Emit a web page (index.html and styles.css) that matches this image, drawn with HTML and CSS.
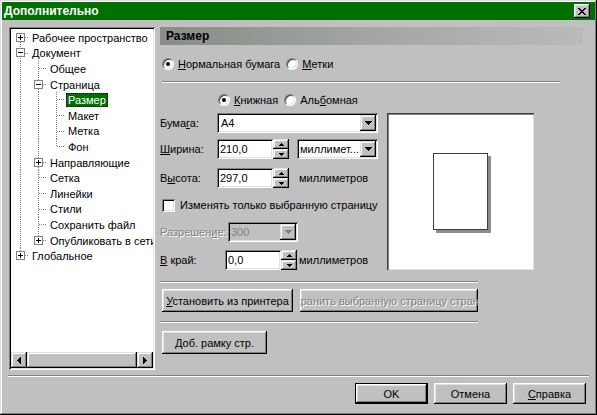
FILE: index.html
```html
<!DOCTYPE html>
<html lang="ru">
<head>
    <meta charset="UTF-8">
    <title>Дополнительно</title>
    <link rel="stylesheet" href="styles.css">
</head>
<body>
<div class="window">
    <div class="titlebar">
        <span class="title">Дополнительно</span>
        <button class="close"><svg width="8" height="7" viewBox="0 0 8 7"><path d="M0 0h2v1H0zM6 0h2v1H6zM1 1h2v1H1zM5 1h2v1H5zM2 2h4v1H2zM3 3h2v1H3zM2 4h4v1H2zM1 5h2v1H1zM5 5h2v1H5zM0 6h2v1H0zM6 6h2v1H6z"/></svg></button>
    </div>

    <div class="main">
        <!-- tree of option groups -->
        <div class="tree">
            <div class="tree-list">
                <div class="node"><span class="g first"><i class="box plus"></i></span><span class="label">Рабочее пространство</span></div>
                <div class="node"><span class="g tee"><i class="box"></i></span><span class="label">Документ</span></div>
                <div class="node"><span class="g pipe"></span><span class="g tee"></span><span class="label">Общее</span></div>
                <div class="node"><span class="g pipe"></span><span class="g tee"><i class="box"></i></span><span class="label">Страница</span></div>
                <div class="node"><span class="g pipe"></span><span class="g pipe"></span><span class="g tee"></span><span class="label sel">Размер</span></div>
                <div class="node"><span class="g pipe"></span><span class="g pipe"></span><span class="g tee"></span><span class="label">Макет</span></div>
                <div class="node"><span class="g pipe"></span><span class="g pipe"></span><span class="g tee"></span><span class="label">Метка</span></div>
                <div class="node"><span class="g pipe"></span><span class="g pipe"></span><span class="g ell"></span><span class="label">Фон</span></div>
                <div class="node"><span class="g pipe"></span><span class="g tee"><i class="box plus"></i></span><span class="label">Направляющие</span></div>
                <div class="node"><span class="g pipe"></span><span class="g tee"></span><span class="label">Сетка</span></div>
                <div class="node"><span class="g pipe"></span><span class="g tee"></span><span class="label">Линейки</span></div>
                <div class="node"><span class="g pipe"></span><span class="g tee"></span><span class="label">Стили</span></div>
                <div class="node"><span class="g pipe"></span><span class="g tee"></span><span class="label">Сохранить файл</span></div>
                <div class="node"><span class="g pipe"></span><span class="g ell"><i class="box plus"></i></span><span class="label">Опубликовать в сети</span></div>
                <div class="node"><span class="g ell"><i class="box plus"></i></span><span class="label">Глобальное</span></div>
            </div>
            <div class="hscroll">
                <span class="sb-btn"><svg width="4" height="7" viewBox="0 0 4 7"><path d="M3 0h1v7H3zM2 1h1v5H2zM1 2h1v3H1zM0 3h1v1H0z"/></svg></span>
                <span class="sb-thumb"></span>
                <span class="sb-btn"><svg width="4" height="7" viewBox="0 0 4 7"><path d="M0 0h1v7H0zM1 1h1v5H1zM2 2h1v3H2zM3 3h1v1H3z"/></svg></span>
            </div>
        </div>

        <!-- page size panel -->
        <div class="panel">
            <div class="header">Размер</div>

            <div class="opts">
                <span class="opt"><span class="radio on"></span><span><u>Н</u>ормальная бумага</span></span>
                <span class="opt"><span class="radio"></span><span><u>М</u>етки</span></span>
            </div>
            <div class="sep sep-top"></div>
            <div class="opts opts-orient">
                <span class="opt"><span class="radio on"></span><span><u>К</u>нижная</span></span>
                <span class="opt"><span class="radio"></span><span>Аль<u>б</u>омная</span></span>
            </div>

            <div class="page">
                <div class="form">
                    <div class="row">
                        <span class="lbl lbl-main">Бума<u>г</u>а:</span>
                        <span class="field combo combo-paper"><span class="val">A4</span><span class="drop"><svg width="7" height="4" viewBox="0 0 7 4"><path d="M0 0h7v1H0zM1 1h5v1H1zM2 2h3v1H2zM3 3h1v1H3z"/></svg></span></span>
                    </div>
                    <div class="row row-w">
                        <span class="lbl lbl-main"><u>Ш</u>ирина:</span>
                        <span class="spin">
                            <span class="field"><span class="val">210,0</span></span>
                            <span class="spin-btns">
                                <span class="sbtn"><svg width="5" height="3" viewBox="0 0 5 3"><path d="M2 0h1v1H2zM1 1h3v1H1zM0 2h5v1H0z"/></svg></span>
                                <span class="sbtn"><svg width="5" height="3" viewBox="0 0 5 3"><path d="M0 0h5v1H0zM1 1h3v1H1zM2 2h1v1H2z"/></svg></span>
                            </span>
                        </span>
                        <span class="field combo combo-units"><span class="val">миллимет...</span><span class="drop"><svg width="7" height="4" viewBox="0 0 7 4"><path d="M0 0h7v1H0zM1 1h5v1H1zM2 2h3v1H2zM3 3h1v1H3z"/></svg></span></span>
                    </div>
                    <div class="row row-h">
                        <span class="lbl lbl-main">В<u>ы</u>сота:</span>
                        <span class="spin">
                            <span class="field"><span class="val">297,0</span></span>
                            <span class="spin-btns">
                                <span class="sbtn"><svg width="5" height="3" viewBox="0 0 5 3"><path d="M2 0h1v1H2zM1 1h3v1H1zM0 2h5v1H0z"/></svg></span>
                                <span class="sbtn"><svg width="5" height="3" viewBox="0 0 5 3"><path d="M0 0h5v1H0zM1 1h3v1H1zM2 2h1v1H2z"/></svg></span>
                            </span>
                        </span>
                        <span class="unit unit-h">миллиметров</span>
                    </div>
                    <div class="row row-check">
                        <span class="check"></span>
                        <span class="check-text">Изменять только выбранную страницу</span>
                    </div>
                    <div class="row row-res">
                        <span class="lbl lbl-res disabled">Разрешен<u>и</u>е:</span>
                        <span class="field combo combo-res off"><span class="val">300</span><span class="drop"><svg width="7" height="4" viewBox="0 0 7 4"><path d="M0 0h7v1H0zM1 1h5v1H1zM2 2h3v1H2zM3 3h1v1H3z"/></svg></span></span>
                    </div>
                    <div class="row row-bleed">
                        <span class="lbl lbl-bleed"><u>В</u> край:</span>
                        <span class="spin">
                            <span class="field"><span class="val">0,0</span></span>
                            <span class="spin-btns">
                                <span class="sbtn"><svg width="5" height="3" viewBox="0 0 5 3"><path d="M2 0h1v1H2zM1 1h3v1H1zM0 2h5v1H0z"/></svg></span>
                                <span class="sbtn"><svg width="5" height="3" viewBox="0 0 5 3"><path d="M0 0h5v1H0zM1 1h3v1H1zM2 2h1v1H2z"/></svg></span>
                            </span>
                        </span>
                        <span class="unit unit-b">миллиметров</span>
                    </div>
                </div>
                <div class="preview"><div class="sheet"></div></div>
            </div>

            <div class="sep sep-mid"></div>
            <div class="btn-row">
                <button class="btn btn-printer"><span><u>У</u>становить из принтера</span></button>
                <button class="btn btn-save disabled"><span>Сохранить выбранную страницу страницу</span></button>
            </div>
            <div class="sep sep-mid sep-second"></div>
            <div class="btn-row btn-row-last">
                <button class="btn btn-frame"><span><u>Д</u>об. рамку стр.</span></button>
            </div>
        </div>
    </div>

    <div class="sep sep-full"></div>
    <div class="footer">
        <button class="btn btn-ok">OK</button>
        <button class="btn btn-cancel">Отмена</button>
        <button class="btn btn-help"><span><u>С</u>правка</span></button>
    </div>
</div>
</body>
</html>
```

FILE: styles.css
```css
* {
    box-sizing: border-box;
}

body {
    margin: 0;
    background: #c0c0c0;
    font-family: "Liberation Sans", Arial, sans-serif;
    font-size: 11px;
    color: #000;
}

u {
    text-decoration: underline;
    text-underline-offset: 1px;
}

/* window frame */
.window {
    width: 597px;
    height: 415px;
    padding: 2px;
    background: #c0c0c0;
    box-shadow: inset -1px -1px #000, inset 1px 1px #dfdfdf, inset -2px -2px #808080, inset 2px 2px #fff;
    display: flex;
    flex-direction: column;
}

.titlebar {
    height: 18px;
    background: #007000;
    color: #fff;
    display: flex;
    align-items: center;
    justify-content: space-between;
    padding: 0 5px 0 2px;
}

.title {
    font-weight: bold;
    font-size: 12px;
}

.close {
    width: 16px;
    height: 14px;
    padding: 0;
    border: 0;
    background: #c0c0c0;
    box-shadow: inset -1px -1px #000, inset 1px 1px #fff, inset -2px -2px #808080, inset 2px 2px #dfdfdf;
    display: flex;
    align-items: center;
    justify-content: center;
}

.main {
    display: flex;
    padding: 7px 0 0 7px;
    height: 350px;
}

/* tree */
.tree {
    width: 146px;
    height: 343px;
    padding: 2px;
    background: #fff;
    box-shadow: inset 1px 1px #808080, inset -1px -1px #fff, inset 2px 2px #000, inset -2px -2px #dfdfdf;
    display: flex;
    flex-direction: column;
}

.tree-list {
    flex: 1;
    overflow: hidden;
    padding-top: 1px;
}

.node {
    height: 15.6px;
    display: flex;
    align-items: center;
    white-space: nowrap;
}

.g {
    flex: none;
    width: 18px;
    height: 100%;
    display: flex;
    align-items: center;
    background-repeat: no-repeat;
}

.g.pipe {
    background-image: repeating-linear-gradient(#808080 0 1px, transparent 1px 2px);
    background-size: 1px 100%;
    background-position: 9px 0;
}

.g.tee {
    background-image: repeating-linear-gradient(#808080 0 1px, transparent 1px 2px),
                      repeating-linear-gradient(90deg, #808080 0 1px, transparent 1px 2px);
    background-size: 1px 100%, 9px 1px;
    background-position: 9px 0, 10px 7px;
}

.g.ell {
    background-image: repeating-linear-gradient(#808080 0 1px, transparent 1px 2px),
                      repeating-linear-gradient(90deg, #808080 0 1px, transparent 1px 2px);
    background-size: 1px 8px, 9px 1px;
    background-position: 9px 0, 10px 7px;
}

.g.first {
    background-image: repeating-linear-gradient(#808080 0 1px, transparent 1px 2px),
                      repeating-linear-gradient(90deg, #808080 0 1px, transparent 1px 2px);
    background-size: 1px 8px, 9px 1px;
    background-position: 9px 8px, 10px 7px;
}

.box {
    width: 9px;
    height: 9px;
    margin-left: 5px;
    margin-top: -1px;
    background: #fff;
    border: 1px solid #808080;
    background-image: linear-gradient(#000, #000);
    background-size: 5px 1px;
    background-position: center;
    background-repeat: no-repeat;
}

.box.plus {
    background-image: linear-gradient(#000, #000), linear-gradient(#000, #000);
    background-size: 5px 1px, 1px 5px;
}

.label {
    margin-left: 1px;
    padding: 0 2px;
    line-height: 14px;
    height: 14px;
}

.label.sel {
    background: #007000;
    color: #fff;
    outline: 1px dotted #000;
    outline-offset: -1px;
}

.hscroll {
    height: 16px;
    display: flex;
    background: #c0c0c0;
}

.sb-btn, .sb-thumb {
    background: #c0c0c0;
    box-shadow: inset -1px -1px #000, inset 1px 1px #dfdfdf, inset -2px -2px #808080, inset 2px 2px #fff;
}

.sb-btn {
    width: 16px;
    display: flex;
    align-items: center;
    justify-content: center;
}

.sb-thumb {
    flex: 1;
}

/* right panel */
.panel {
    width: 423px;
    margin-left: 5px;
}

.header {
    height: 18px;
    padding-left: 6px;
    display: flex;
    align-items: center;
    font-weight: bold;
    font-size: 12px;
    background: linear-gradient(90deg, #878d87, #a3a6a3 50%, #bababa);
}

.opts {
    display: flex;
    align-items: center;
    height: 16px;
    margin-top: 11px;
    padding-left: 2px;
}

.opts-orient {
    margin-top: 9px;
    padding-left: 58px;
}

.opt {
    display: flex;
    align-items: center;
    gap: 4px;
    margin-right: 6px;
}

.radio {
    width: 12px;
    height: 12px;
    border-radius: 50%;
    background: #fff;
    border: 1px solid;
    border-color: #808080 #fff #fff #808080;
    box-shadow: inset 1px 1px #404040, inset -1px -1px #dfdfdf;
    display: flex;
    align-items: center;
    justify-content: center;
}

.radio.on::after {
    content: "";
    width: 4px;
    height: 4px;
    border-radius: 50%;
    background: #000;
}

.sep {
    height: 2px;
    border-top: 1px solid #808080;
    border-bottom: 1px solid #fff;
}

.sep-top {
    width: 398px;
    margin: 9px 0 0 2px;
}

.sep-mid {
    width: 318px;
    margin-top: 11px;
}

.sep-second {
    margin-top: 9px;
}

.page {
    display: flex;
    gap: 9px;
    margin-top: 5px;
}

.form {
    width: 218px;
}

.row {
    display: flex;
    align-items: center;
    height: 20px;
}

.row-w {
    margin-top: 6px;
}

.row-h, .row-res {
    margin-top: 9px;
}

.row-check {
    height: 16px;
    margin-top: 9px;
}

.row-bleed {
    margin-top: 8px;
}

.lbl {
    flex: none;
}

.lbl-main {
    width: 57px;
}

.lbl-res {
    width: 68px;
}

.lbl-bleed {
    width: 65px;
}

.disabled, .disabled span {
    color: #808080;
    text-shadow: 1px 1px #fff;
}

.field {
    height: 20px;
    background: #fff;
    box-shadow: inset 1px 1px #808080, inset -1px -1px #fff, inset 2px 2px #000, inset -2px -2px #dfdfdf;
    display: flex;
    align-items: center;
    padding: 2px;
}

.val {
    flex: 1;
    padding-left: 1px;
    white-space: nowrap;
    overflow: hidden;
}

.combo-paper .val {
    padding-left: 2px;
}

.drop {
    flex: none;
    width: 16px;
    height: 16px;
    background: #c0c0c0;
    box-shadow: inset -1px -1px #000, inset 1px 1px #dfdfdf, inset -2px -2px #808080, inset 2px 2px #fff;
    display: flex;
    align-items: center;
    justify-content: center;
}

.combo-paper {
    width: 161px;
}

.combo-units {
    width: 81px;
    margin-left: 8px;
}

.combo-res {
    width: 70px;
}

.combo.off {
    background: #c0c0c0;
}

.combo.off .val {
    color: #808080;
}

.combo.off .drop svg {
    fill: #808080;
}

.spin {
    display: flex;
    width: 72px;
    height: 20px;
}

.spin .field {
    flex: 1;
}

.spin-btns {
    width: 16px;
    display: flex;
    flex-direction: column;
}

.sbtn {
    flex: 1;
    background: #c0c0c0;
    box-shadow: inset -1px -1px #000, inset 1px 1px #dfdfdf, inset -2px -2px #808080, inset 2px 2px #fff;
    display: flex;
    align-items: center;
    justify-content: center;
}

.unit-h {
    margin-left: 10px;
}

.unit-b {
    margin-left: 2px;
}

.check {
    width: 13px;
    height: 13px;
    margin-left: 2px;
    background: #fff;
    box-shadow: inset 1px 1px #808080, inset -1px -1px #fff, inset 2px 2px #000, inset -2px -2px #dfdfdf;
}

.check-text {
    margin-left: 5px;
    white-space: nowrap;
}

.preview {
    width: 147px;
    height: 157px;
    background: #fff;
    box-shadow: inset 1px 1px #404040, inset 2px 2px #808080, inset -1px -1px #dfdfdf;
    display: flex;
    align-items: center;
    justify-content: center;
}

.sheet {
    width: 55px;
    height: 77px;
    background: #fff;
    border: 1px solid #404040;
    box-shadow: 3px 3px 0 #8c8c8c;
}

/* buttons */
.btn {
    font: inherit;
    color: #000;
    background: #c0c0c0;
    border: 0;
    padding: 0;
    height: 23px;
    overflow: hidden;
    white-space: nowrap;
    box-shadow: inset -1px -1px #000, inset 1px 1px #fff, inset -2px -2px #808080, inset 2px 2px #dfdfdf;
    display: flex;
    align-items: center;
    justify-content: center;
}

.btn-row {
    display: flex;
    margin-top: 6px;
    padding-left: 2px;
}

.btn-row-last {
    margin-top: 8px;
}

.btn-printer {
    width: 131px;
}

.btn-save {
    width: 178px;
    margin-left: 7px;
}

.btn-frame {
    width: 105px;
}

.sep-full {
    margin: 5px 6px 0 6px;
}

.footer {
    display: flex;
    justify-content: flex-end;
    gap: 6px;
    margin-top: 6px;
    padding-right: 9px;
}

.footer .btn {
    height: 21px;
    width: 73px;
}

.footer .btn-ok {
    box-shadow: inset 0 0 0 1px #000, inset -2px -2px #000, inset 2px 2px #fff, inset -3px -3px #808080, inset 3px 3px #dfdfdf;
}
```
